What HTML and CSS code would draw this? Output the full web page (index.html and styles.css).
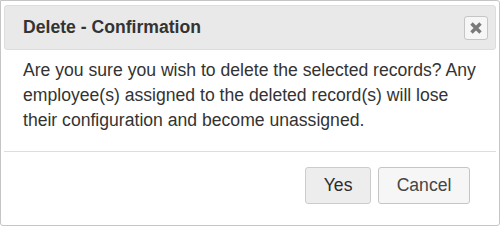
FILE: index.html
```html
<!DOCTYPE html>
<html>
<head>
<meta charset="utf-8">
<link rel="stylesheet" href="styles.css">
</head>
<body>
<div class="dialog">
  <div class="titlebar">
    <span class="title">Delete - Confirmation</span>
    <button class="close" aria-label="Close">
      <svg width="12" height="12" viewBox="0 0 12 12"><path d="M1.5 1.5 L10.5 10.5 M10.5 1.5 L1.5 10.5" stroke="#7a7a7a" stroke-width="3.4" stroke-linecap="butt"/></svg>
    </button>
  </div>
  <div class="content">Are you sure you wish to delete the selected records? Any employee(s) assigned to the deleted record(s) will lose their configuration and become unassigned.</div>
  <div class="buttonpane">
    <button class="btn btn-hover">Yes</button>
    <button class="btn">Cancel</button>
  </div>
</div>
</body>
</html>
```

FILE: styles.css
```css
html, body {
  margin: 0;
  padding: 0;
  background: #ffffff;
}
.dialog {
  box-sizing: border-box;
  width: 500px;
  height: 226px;
  border: 1px solid #c5c5c5;
  border-radius: 0 3px 3px 3px;
  padding: 4px 3px 3px 3px;
  display: flex;
  flex-direction: column;
  font-family: "Liberation Sans", Arial, sans-serif;
  font-size: 17.6px;
  color: #333333;
  background: #ffffff;
}
.titlebar {
  box-sizing: border-box;
  height: 45px;
  border: 1px solid #dddddd;
  border-radius: 3px;
  background: #e9e9e9;
  display: flex;
  align-items: center;
  justify-content: space-between;
  padding: 0 7px 0 18px;
}
.title {
  font-weight: bold;
  color: #333333;
}
.close {
  box-sizing: border-box;
  width: 24px;
  height: 24px;
  padding: 0;
  margin: 0;
  border: 1px solid #c5c5c5;
  border-radius: 3px;
  background: #f6f6f6;
  display: flex;
  align-items: center;
  justify-content: center;
}
.content {
  padding: 8px 18px 18px 19px;
  line-height: 25px;
}
.buttonpane {
  border-top: 1px solid #dddddd;
  padding: 15px 26px 0 0;
  display: flex;
  justify-content: flex-end;
  gap: 7px;
}
.btn {
  font-family: "Liberation Sans", Arial, sans-serif;
  font-size: 17.6px;
  color: #454545;
  background: #f6f6f6;
  border: 1px solid #c5c5c5;
  border-radius: 3px;
  padding: 0.4em 1em;
  margin: 0;
  line-height: normal;
}
.btn-hover {
  background: #ededed;
  border-color: #cccccc;
  color: #2b2b2b;
}
```
